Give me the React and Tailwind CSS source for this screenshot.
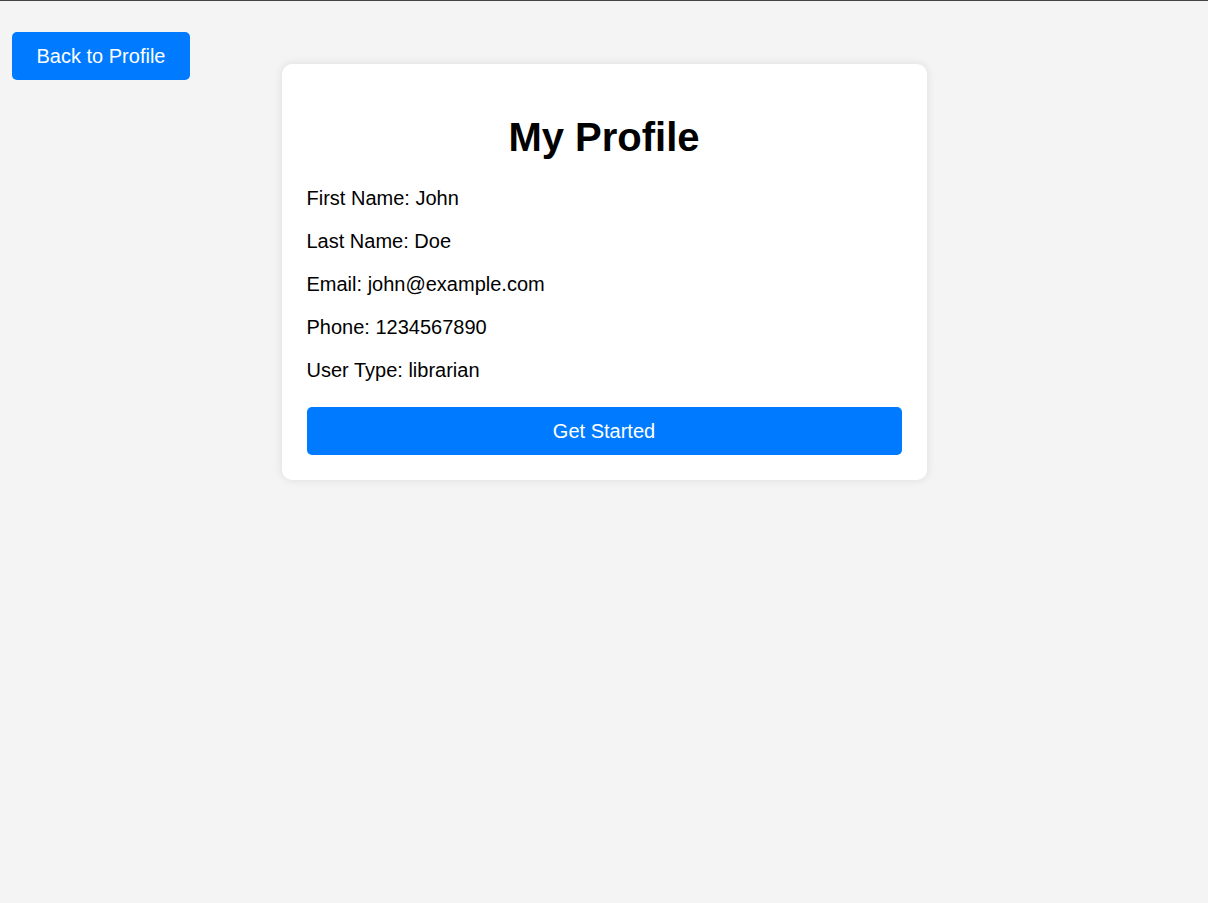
import React from 'react';

const user = {
    firstName: 'John',
    lastName: 'Doe',
    email: 'john@example.com',
    phone: '1234567890',
    userType: 'librarian',
};

export default function App() {
    return (
        <div className="relative min-h-[903px] bg-[#f4f4f4] border-t border-[#444] font-['Liberation_Sans',Arial,sans-serif] text-black">
            {/* back button */}
            <button className="absolute top-[31px] left-3 w-[178px] h-12 rounded-[5px] bg-[#007bff] text-white text-[20px]">
                Back to Profile
            </button>

            <div className="flex justify-center pt-[63px]">
                <div className="w-[645px] bg-white rounded-[10px] shadow-[0_0_10px_rgba(0,0,0,0.1)] px-[25px] pt-[50px] pb-[25px]">
                    <h1 className="text-[40px] font-bold leading-[46px] text-center">My Profile</h1>

                    <div className="mt-[27px] flex flex-col gap-5 text-[20px] leading-[23px]">
                        <p>First Name: {user.firstName}</p>
                        <p>Last Name: {user.lastName}</p>
                        <p>Email: {user.email}</p>
                        <p>Phone: {user.phone}</p>
                        <p>User Type: {user.userType}</p>
                    </div>

                    <button className="mt-[25px] w-full h-12 rounded-[5px] bg-[#007bff] text-white text-[20px]">
                        Get Started
                    </button>
                </div>
            </div>
        </div>
    );
}
